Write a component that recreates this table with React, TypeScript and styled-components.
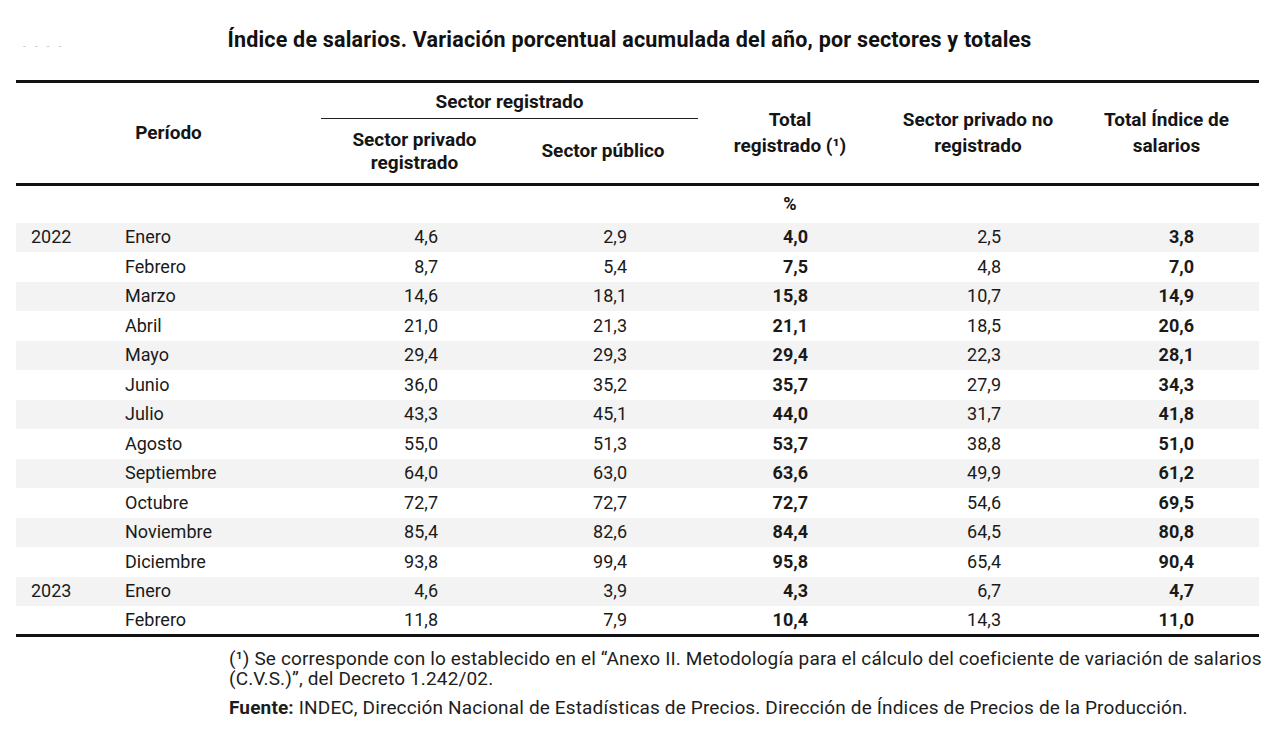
import React from 'react';
import styled, { createGlobalStyle } from 'styled-components';

const GlobalStyle = createGlobalStyle`
    body {
        margin: 0;
        background: #ffffff;
        color: #111111;
        font-family: Roboto, "Liberation Sans", Arial, sans-serif;
    }
`;

interface RowType {
    year?: string;
    month: string;
    privado: string;
    publico: string;
    total: string;
    noReg: string;
    indice: string;
}

const rows: RowType[] = [
    {year: '2022', month: 'Enero', privado: '4,6', publico: '2,9', total: '4,0', noReg: '2,5', indice: '3,8'},
    {month: 'Febrero', privado: '8,7', publico: '5,4', total: '7,5', noReg: '4,8', indice: '7,0'},
    {month: 'Marzo', privado: '14,6', publico: '18,1', total: '15,8', noReg: '10,7', indice: '14,9'},
    {month: 'Abril', privado: '21,0', publico: '21,3', total: '21,1', noReg: '18,5', indice: '20,6'},
    {month: 'Mayo', privado: '29,4', publico: '29,3', total: '29,4', noReg: '22,3', indice: '28,1'},
    {month: 'Junio', privado: '36,0', publico: '35,2', total: '35,7', noReg: '27,9', indice: '34,3'},
    {month: 'Julio', privado: '43,3', publico: '45,1', total: '44,0', noReg: '31,7', indice: '41,8'},
    {month: 'Agosto', privado: '55,0', publico: '51,3', total: '53,7', noReg: '38,8', indice: '51,0'},
    {month: 'Septiembre', privado: '64,0', publico: '63,0', total: '63,6', noReg: '49,9', indice: '61,2'},
    {month: 'Octubre', privado: '72,7', publico: '72,7', total: '72,7', noReg: '54,6', indice: '69,5'},
    {month: 'Noviembre', privado: '85,4', publico: '82,6', total: '84,4', noReg: '64,5', indice: '80,8'},
    {month: 'Diciembre', privado: '93,8', publico: '99,4', total: '95,8', noReg: '65,4', indice: '90,4'},
    {year: '2023', month: 'Enero', privado: '4,6', publico: '3,9', total: '4,3', noReg: '6,7', indice: '4,7'},
    {month: 'Febrero', privado: '11,8', publico: '7,9', total: '10,4', noReg: '14,3', indice: '11,0'},
];

const colWidths = [94, 211, 187, 190, 184, 192, 185];

const Page = {
    Wrapper: styled.div`
        width: 1280px;
        height: 753px;
        padding: 26px 21px 0 16px;
        box-sizing: border-box;
        position: relative;
        overflow: hidden;
    `,
    Dashes: styled.div`
        position: absolute;
        left: 23px;
        top: 40px;
        font-size: 11px;
        letter-spacing: 3px;
        color: #c8c8c8;
    `,
    Title: styled.h1`
        margin: 0 0 26px 0;
        text-align: center;
        font-size: 21.5px;
        letter-spacing: 0.2px;
        line-height: 28px;
        font-weight: 700;
        color: #111;
        padding-right: 16px;
    `
}

const TableStyle = {
    Table: styled.table`
        width: 1243px;
        border-collapse: collapse;
        table-layout: fixed;
        border-top: 3px solid #111;
        border-bottom: 3px solid #111;
        font-size: 18px;
    `,
    HeadCell: styled.th`
        font-weight: 700;
        font-size: 19px;
        text-align: center;
        vertical-align: middle;
        line-height: 26px;
        padding: 0 2px;
        color: #151515;
        border-bottom: 3px solid #111;
    `,
    GroupCell: styled.th`
        font-weight: 700;
        font-size: 19px;
        text-align: center;
        height: 36px;
        padding: 0;
        line-height: 25px;
        color: #151515;
        position: relative;
        &::after {
            content: '';
            position: absolute;
            left: 0;
            right: 0;
            bottom: 0;
            border-bottom: 1.5px solid #222;
        }
    `,
    SubHeadRow: styled.tr`
        height: 65px;
    `,
    SubHeadCell: styled.th`
        font-weight: 700;
        font-size: 19px;
        text-align: center;
        vertical-align: middle;
        line-height: 23px;
        padding: 0 2px;
        color: #151515;
        border-bottom: 3px solid #111;
    `,
    UnitCell: styled.td`
        text-align: center;
        font-weight: 700;
        height: 37px;
        padding: 0;
        line-height: 20px;
    `,
    Row: styled.tr<{ $shaded: boolean }>`
        background: ${props => props.$shaded ? '#f3f3f3' : '#ffffff'};
        height: 29.5px;
    `,
    TextCell: styled.td`
        text-align: left;
        padding: 0 0 0 15px;
        line-height: 20px;
        color: #1a1a1a;
        white-space: nowrap;
    `,
    NumCell: styled.td<{ $bold?: boolean; $pad: number }>`
        text-align: right;
        padding: 0 ${props => props.$pad}px 0 0;
        line-height: 20px;
        font-weight: ${props => props.$bold ? 700 : 400};
        color: #1a1a1a;
    `
}

const NoteStyle = {
    Wrapper: styled.div`
        margin: 12px 0 0 213px;
        width: 1045px;
        font-size: 19px;
        letter-spacing: 0.15px;
        line-height: 20px;
        color: #1d1d1d;
    `,
    Para: styled.p`
        margin: 0 0 9px 0;
    `
}

const SalaryTable: React.FC = () => {
    return (<TableStyle.Table>
        <colgroup>
            {colWidths.map((w, i) => <col key={i} style={{width: w}}/>)}
        </colgroup>
        <thead>
            <tr>
                <TableStyle.HeadCell colSpan={2} rowSpan={2}>Período</TableStyle.HeadCell>
                <TableStyle.GroupCell colSpan={2}>Sector registrado</TableStyle.GroupCell>
                <TableStyle.HeadCell rowSpan={2}>Total<br/>registrado (¹)</TableStyle.HeadCell>
                <TableStyle.HeadCell rowSpan={2}>Sector privado no<br/>registrado</TableStyle.HeadCell>
                <TableStyle.HeadCell rowSpan={2}>Total Índice de<br/>salarios</TableStyle.HeadCell>
            </tr>
            <TableStyle.SubHeadRow>
                <TableStyle.SubHeadCell>Sector privado<br/>registrado</TableStyle.SubHeadCell>
                <TableStyle.SubHeadCell>Sector público</TableStyle.SubHeadCell>
            </TableStyle.SubHeadRow>
        </thead>
        <tbody>
            <tr>
                <td colSpan={4}/>
                <TableStyle.UnitCell>%</TableStyle.UnitCell>
                <td colSpan={2}/>
            </tr>
            {rows.map((r, i) => (
                <TableStyle.Row key={i} $shaded={i % 2 === 0}>
                    <TableStyle.TextCell>{r.year}</TableStyle.TextCell>
                    <TableStyle.TextCell>{r.month}</TableStyle.TextCell>
                    <TableStyle.NumCell $pad={70}>{r.privado}</TableStyle.NumCell>
                    <TableStyle.NumCell $pad={71}>{r.publico}</TableStyle.NumCell>
                    <TableStyle.NumCell $pad={74} $bold>{r.total}</TableStyle.NumCell>
                    <TableStyle.NumCell $pad={73}>{r.noReg}</TableStyle.NumCell>
                    <TableStyle.NumCell $pad={65} $bold>{r.indice}</TableStyle.NumCell>
                </TableStyle.Row>
            ))}
        </tbody>
    </TableStyle.Table>)
}

const App: React.FC = () => {
    return (<>
        <GlobalStyle/>
        <Page.Wrapper>
            <Page.Dashes>- - - -</Page.Dashes>
            <Page.Title>Índice de salarios. Variación porcentual acumulada del año, por sectores y totales</Page.Title>
            <SalaryTable/>
            <NoteStyle.Wrapper>
                <NoteStyle.Para>(¹) Se corresponde con lo establecido en el “Anexo II. Metodología para el cálculo del coeficiente de variación de salarios (C.V.S.)”, del Decreto 1.242/02.</NoteStyle.Para>
                <NoteStyle.Para><b>Fuente:</b> INDEC, Dirección Nacional de Estadísticas de Precios. Dirección de Índices de Precios de la Producción.</NoteStyle.Para>
            </NoteStyle.Wrapper>
        </Page.Wrapper>
    </>)
}

export default App;
